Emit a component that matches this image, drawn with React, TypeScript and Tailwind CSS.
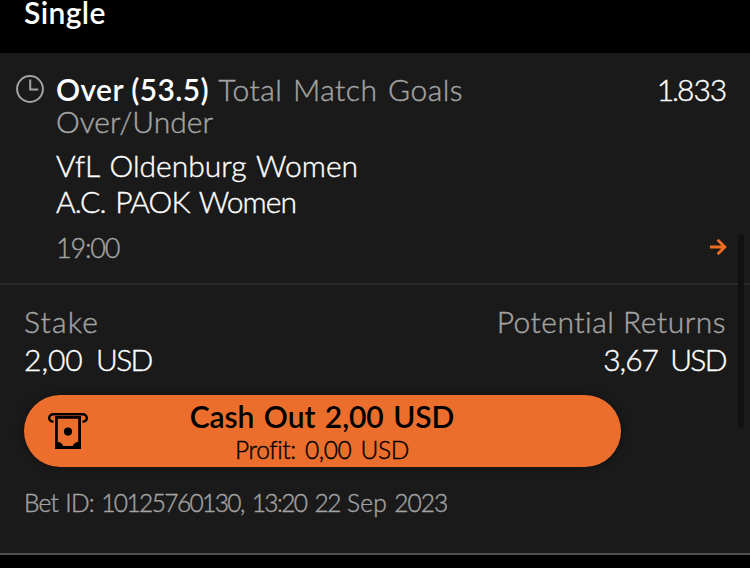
import React from 'react';

const ClockIcon: React.FC = () => (
  <svg width="28" height="28" viewBox="0 0 28 28" fill="none" stroke="#a3a3a3" strokeWidth="2">
    <circle cx="14" cy="14" r="12.9" />
    <path d="M14.2 4.6v10h8" />
  </svg>
);

const ArrowIcon: React.FC = () => (
  <svg width="18" height="18" viewBox="0 0 18 18" fill="none" stroke="#f26c21" strokeWidth="2.8">
    <path d="M1 9h15M8.6 1.8L15.8 9l-7.2 7.2" />
  </svg>
);

const CashOutIcon: React.FC = () => (
  <svg width="40" height="37" viewBox="0 0 40 37" fill="none">
    <path d="M5.5 8.6C3 8.6 1.2 7.2 1.2 5S3 1.3 5.2 1.3h29.6C37 1.3 38.8 2.8 38.8 5s-1.8 3.6-4.3 3.6" stroke="#000" strokeWidth="2.4" />
    <path d="M8.4 4.4h23.2v30.1H8.4z" stroke="#000" strokeWidth="2.8" />
    <circle cx="20" cy="18.6" r="4.1" fill="#000" />
    <path d="M7 28.4c4.200 0 8 1.500 8 5v2.500H7zM33 28.400c-4.200 0-8 1.500-8 5v2.500h8z" fill="#000" />
  </svg>
);

const App: React.FC = () => {
  return (
    <div className="relative h-[568px] w-[750px] overflow-hidden whitespace-nowrap bg-black font-['Lato',sans-serif] text-[30px] font-light text-white [-webkit-text-stroke:0.4px]">
      <header className="flex h-[53px] items-start pl-6">
        <h1 className="-mt-[6px] text-[30px] leading-[36px] font-semibold tracking-[0.4px] [-webkit-text-stroke:0]">Single</h1>
      </header>

      <main className="h-[502px] border-b-2 border-[#505050] bg-[#1a1a1a]">
        <section className="h-[232px] border-b-2 border-[#2a2a2a] pt-5 pr-6 pl-4">
          <div className="flex">
            <div className="w-[40px] pt-[2px]">
              <ClockIcon />
            </div>
            <div className="flex-1 leading-[32px] text-[#a3a3a3]">
              <div className="flex justify-between">
                <p>
                  <span className="font-semibold tracking-[0.4px] text-white [-webkit-text-stroke:0]">Over (53.5)</span>{' '}
                  <span className="ml-[1px] tracking-[0.5px] [word-spacing:2px]">Total Match Goals</span>
                </p>
                <span className="tracking-[-1.1px] text-white">
                  <span className="tracking-[-2px]">1.</span>833
                </span>
              </div>
              <p>Over/Under</p>
            </div>
          </div>
          <div className="mt-[10px] pl-[40px] leading-[36px]">
            <p className="[word-spacing:2px]">VfL Oldenburg Women</p>
            <p className="tracking-[-0.9px] [word-spacing:2.5px]">A.C. PAOK Women</p>
          </div>
          <div className="mt-[11px] flex items-center justify-between pl-[40px]">
            <span className="text-[27px] leading-[36px] tracking-[-1.2px] text-[#a3a3a3]">19:00</span>
            <span className="-mt-[2px] -mr-[1px]">
              <ArrowIcon />
            </span>
          </div>
        </section>

        <section className="px-6 pt-[17px]">
          <div className="flex justify-between leading-[38px]">
            <div>
              <p className="tracking-[1.2px] text-[#a3a3a3]">Stake</p>
              <p>
                2,00 <span className="ml-[5px] tracking-[-1.6px]">USD</span>
              </p>
            </div>
            <div className="text-right">
              <p className="tracking-[0.5px] text-[#a3a3a3]">Potential Returns</p>
              <p>
                <span className="tracking-[-1px]">3,67</span> <span className="ml-[4px] tracking-[-1.6px]">USD</span>
              </p>
            </div>
          </div>
          <button className="mt-[17px] flex h-[72px] w-[597px] rounded-full bg-[#eb6e2d] pt-[3px] pl-6 text-black shadow-[0_0_10px_rgba(0,0,0,0.4)]">
            <span className="mt-[15px]">
              <CashOutIcon />
            </span>
            <span className="mr-[65px] flex flex-1 flex-col items-center">
              <span className="text-[30px] leading-[36px] font-semibold tracking-[-0.1px] [word-spacing:2.2px] [-webkit-text-stroke:0]">Cash Out 2,00 USD</span>
              <span className="mt-[1px] text-[24.5px] leading-[30px] tracking-[-0.4px] [word-spacing:3px]">Profit: 0,00 USD</span>
            </span>
          </button>
          <p className="mt-[21px] text-[24.5px] leading-[30px] tracking-[-0.8px] text-[#a3a3a3] [word-spacing:1.5px]">
            Bet ID: <span className="tracking-[-1.6px] [word-spacing:3px]">10125760130, 13:20 22</span> <span className="tracking-[0.2px]">Sep</span>{' '}
            <span className="tracking-[-1px]">2023</span>
          </p>
        </section>
      </main>

      {/* scroll thumb */}
      <div className="absolute top-[234px] left-[738px] h-[194px] w-[6px] rounded-full bg-[#111]" />
    </div>
  );
};

export default App;
